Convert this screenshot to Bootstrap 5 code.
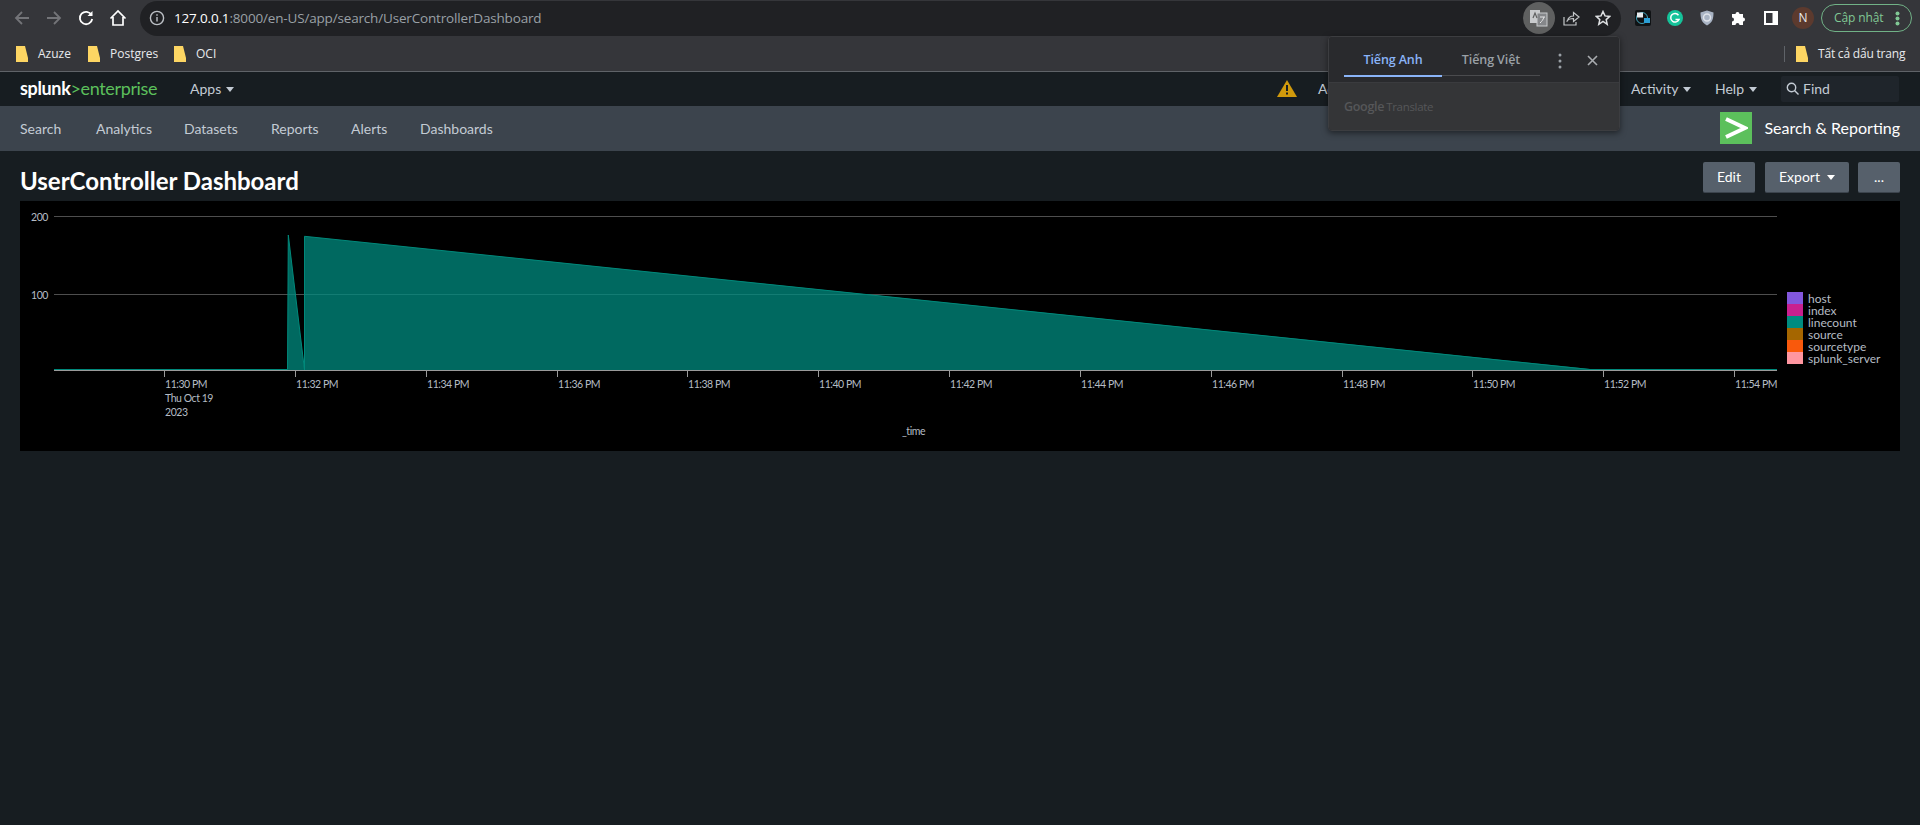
<!DOCTYPE html>
<html lang="en">

<head>
    <meta charset="UTF-8">
    <meta name="viewport" content="width=device-width, initial-scale=1.0">
    <title>UserController Dashboard</title>
    <link href="https://cdn.jsdelivr.net/npm/bootstrap@5.3.0/dist/css/bootstrap.min.css" rel="stylesheet">
    <style>
        body {
            background-color: #171d21;
            font-family: 'Lato', 'Open Sans', sans-serif;
            height: 825px;
            overflow: hidden;
            position: relative;
        }

        /* browser chrome */
        .tool-bar {
            height: 36px;
            background-color: #35363a;
            padding-left: 6px;
        }

        .tool-btn {
            width: 32px;
            height: 32px;
            flex: none;
        }

        .addr-bar {
            width: 1481px;
            height: 35px;
            margin-left: 6px;
            margin-right: 14px;
            background-color: #202124;
            border-radius: 18px;
            padding-left: 9px;
            padding-right: 10px;
            flex: none;
        }

        .addr-text {
            font-family: 'Open Sans', sans-serif;
            font-size: 13.5px;
            color: #9aa0a6;
            margin-left: 9px;
            letter-spacing: -0.17px;
        }

        .addr-text b {
            font-weight: 400;
            color: #fff;
        }

        .translate-btn {
            width: 32px;
            height: 32px;
            border-radius: 50%;
            background-color: #5f6060;
        }

        .update-pill {
            width: 91px;
            height: 28px;
            border: 1px solid #71b287;
            border-radius: 14px;
            color: #81c995;
            font-family: 'Open Sans', sans-serif;
            font-size: 12px;
            letter-spacing: -0.1px;
            padding-left: 12px;
            padding-right: 11px;
        }

        .user-dot {
            width: 22px;
            height: 22px;
            border-radius: 50%;
            background-color: #5c3a2e;
            color: #e8eaed;
            font-size: 12px;
            font-family: 'Open Sans', sans-serif;
        }

        .mark-bar {
            height: 36px;
            background-color: #35363a;
            border-bottom: 1px solid #5f6368;
            font-family: 'Open Sans', sans-serif;
            font-size: 12px;
            color: #e8eaed;
            padding-left: 16px;
        }

        .mark-item {
            gap: 10px;
        }

        .mark-sep {
            width: 1px;
            height: 16px;
            background-color: #5f6368;
        }

        /* splunk bars */
        .spl-bar {
            height: 34px;
            background-color: #171d21;
            color: #c3cbd4;
            font-size: 14px;
            padding-left: 20px;
            padding-bottom: 1px;
        }

        .spl-logo {
            width: 136px;
            font-size: 18px;
            line-height: 1;
            letter-spacing: -0.35px;
            color: #5cc05c;
            white-space: nowrap;
            margin-top: -1px;
        }

        .spl-logo b {
            color: #fff;
            font-weight: 700;
        }

        .caret-mark {
            display: inline-block;
            width: 0;
            height: 0;
            margin-left: 5px;
            vertical-align: 2px;
            border-left: 4px solid transparent;
            border-right: 4px solid transparent;
            border-top: 5px solid currentColor;
        }

        .find-box {
            width: 118px;
            height: 26px;
            background-color: #1f252b;
            border-radius: 2px;
            padding-left: 5px;
            margin-right: 21px;
        }

        .app-bar {
            height: 45px;
            background-color: #3c444d;
            color: #c3cbd4;
            font-size: 14px;
            padding-left: 20px;
            padding-right: 20px;
            padding-bottom: 1px;
        }

        .app-name {
            font-size: 16px;
            color: #fff;
            margin-left: 12px;
        }

        .app-logo {
            width: 32px;
            height: 32px;
            background-color: #5cc05c;
        }

        /* dashboard */
        .dash-head {
            height: 50px;
            padding: 3px 20px 0;
        }

        .dash-title {
            font-size: 24px;
            font-weight: 700;
            color: #fff;
            margin: 7px 0 0;
        }

        .dash-btn {
            height: 31px;
            background-color: #56606b;
            border: 0;
            border-bottom: 1px solid #3c444d;
            border-radius: 2px;
            color: #fff;
            font-size: 14px;
            padding: 0 0 2px;
        }

        .chart-panel {
            margin: 0 20px;
            height: 250px;
            background-color: #000;
        }

        .chart-panel svg {
            display: block;
        }

        .chart-panel text {
            font-family: 'Lato', sans-serif;
            font-size: 10.5px;
            letter-spacing: -0.45px;
            fill: #b5bcc4;
        }

        .chart-panel .legend-text {
            font-size: 12px;
            letter-spacing: 0;
        }

        /* translate popup */
        .translate-pop {
            position: absolute;
            left: 1328px;
            top: 36px;
            width: 292px;
            height: 95px;
            background-color: #292a2d;
            border: 1px solid #3c3d40;
            border-radius: 4px;
            box-shadow: 0 2px 6px rgba(0, 0, 0, .5);
            font-family: 'Open Sans', sans-serif;
            font-size: 12.5px;
            font-weight: 600;
            letter-spacing: -0.1px;
            overflow: hidden;
        }

        .pop-tabs {
            height: 46px;
            background-color: #292a2d;
            border-bottom: 1px solid #3a3b3e;
            position: relative;
            padding-left: 15px;
        }

        .pop-tab {
            width: 98px;
            height: 38px;
            text-align: center;
            color: #9aa0a6;
            border-bottom: 1px solid #4a4b4e;
            line-height: 45px;
            box-sizing: content-box;
        }

        .pop-tab.on {
            color: #8ab4f8;
            border-bottom: 2px solid #8ab4f8;
        }

        .pop-body {
            height: 48px;
            background-color: #343537;
            padding-left: 15px;
            color: #565759;
            font-size: 11.5px;
            font-weight: 400;
            letter-spacing: -0.3px;
        }

        .pop-body b {
            font-size: 12.5px;
            font-weight: 600;
            margin-right: 2px;
        }
    </style>
</head>

<body>
    <!-- browser toolbar -->
    <div class="tool-bar d-flex align-items-center">
        <div class="tool-btn d-flex align-items-center justify-content-center">
            <svg width="16" height="16" viewBox="0 0 16 16" fill="none" stroke="#737478" stroke-width="1.8"><path d="M15 8H2M8 2 2 8l6 6"/></svg>
        </div>
        <div class="tool-btn d-flex align-items-center justify-content-center">
            <svg width="16" height="16" viewBox="0 0 16 16" fill="none" stroke="#737478" stroke-width="1.8"><path d="M1 8h13M8 2l6 6-6 6"/></svg>
        </div>
        <div class="tool-btn d-flex align-items-center justify-content-center">
            <svg width="16" height="16" viewBox="0 0 16 16" fill="none" stroke="#fff" stroke-width="1.8"><path d="M13.5 5A6.2 6.2 0 1 0 14.2 9"/><path d="M14.5 1v5h-5" fill="#fff" stroke="none"/></svg>
        </div>
        <div class="tool-btn d-flex align-items-center justify-content-center">
            <svg width="18" height="18" viewBox="0 0 18 18" fill="none" stroke="#fff" stroke-width="1.7"><path d="M1.5 9.5 9 2l7.5 7.5M4 8v8h10V8"/></svg>
        </div>
        <div class="addr-bar d-flex align-items-center">
            <svg width="16" height="16" viewBox="0 0 16 16" fill="none" stroke="#bdc1c6" stroke-width="1.4"><circle cx="8" cy="8" r="6.6"/><path d="M8 7v4.5M8 4.2v1.6"/></svg>
            <span class="addr-text"><b>127.0.0.1</b>:8000/en-US/app/search/UserControllerDashboard</span>
            <div class="translate-btn d-flex align-items-center justify-content-center ms-auto">
                <svg width="20" height="18" viewBox="0 0 20 18"><rect x="1" y="1" width="10" height="13" fill="#c9cbcd"/><rect x="8" y="4" width="10" height="13" fill="#85878a" stroke="#c9cbcd"/><path d="M4 9l2-5 2 5" fill="none" stroke="#5f6060" stroke-width="1.2"/><path d="M11 8h5M15 8c-1 3-2 4-4 6" fill="none" stroke="#e4e5e6"/></svg>
            </div>
            <svg style="margin-left:7px" width="18" height="18" viewBox="0 0 18 18" fill="none" stroke="#c4c7c9" stroke-width="1.2"><path d="M2 8v8h12v-3"/><path d="M5.5 12c.5-3 3-5 6-5V3.5L17 8l-5.500 4.500V9.500c-2.500 0-5 .5-6.500 2.500z"/></svg>
            <svg style="margin-left:15px" width="16" height="16" viewBox="0 0 16 16" fill="none" stroke="#dfe1e3" stroke-width="1.5"><path d="M8 1.500l2 4.400 4.800.5-3.600 3.200 1 4.700L8 11.500l-4.200 2.800 1-4.700L1.200 6.400 6 5.900z"/></svg>
        </div>
        <svg width="16" height="16" viewBox="0 0 16 16"><rect width="16" height="16" rx="2" fill="#101315"/><circle cx="7" cy="8" r="5.500" fill="none" stroke="#3fa1b8"/><rect x="2" y="2.500" width="6" height="5" fill="#e8eaed"/><rect x="9" y="8" width="6" height="5" fill="#2a9fd6"/></svg>
        <svg style="margin-left:16px" width="16" height="16" viewBox="0 0 16 16"><circle cx="8" cy="8" r="8" fill="#15c39a"/><path d="M11.500 5.200A4.300 4.300 0 1 0 12 9.500H8.500" fill="none" stroke="#fff" stroke-width="1.500"/></svg>
        <svg style="margin-left:17px" width="14" height="16" viewBox="0 0 14 16"><path d="M7 .5 13.500 2.500c0 6-1 10-6.500 13C1.500 12.500.5 8.500.5 2.500z" fill="#a9b4c4"/><circle cx="7" cy="7.500" r="3.500" fill="none" stroke="#dfe3ea" stroke-width="1.500"/></svg>
        <svg style="margin-left:17px" width="16" height="16" viewBox="0 0 16 16"><path d="M1 4h3.500a2 2 0 1 1 4 0H12v3.500a2 2 0 1 1 0 4V15H8.500a2 2 0 1 0-4 0H1v-3.500a2 2 0 1 0 0-4z" fill="#fff"/></svg>
        <svg style="margin-left:17px" width="14" height="14" viewBox="0 0 14 14"><rect width="14" height="14" fill="#fff"/><rect x="2" y="2" width="6.500" height="10" fill="#35363a"/></svg>
        <div class="user-dot d-flex align-items-center justify-content-center" style="margin-left:14px">N</div>
        <div class="update-pill d-flex align-items-center justify-content-between" style="margin-left:7px">
            Cập nhật
            <svg width="5" height="15" viewBox="0 0 5 15" fill="#81c995"><circle cx="2.500" cy="2.500" r="2"/><circle cx="2.500" cy="7.500" r="2"/><circle cx="2.500" cy="12.500" r="2"/></svg>
        </div>
    </div>

    <!-- bookmarks -->
    <div class="mark-bar d-flex align-items-center">
        <div class="mark-item d-flex align-items-center" style="width:72px">
            <svg width="12" height="16" viewBox="0 0 12 16"><path d="M0 0h9l3 12v4H0z" fill="#fdd663"/></svg>Azuze
        </div>
        <div class="mark-item d-flex align-items-center" style="width:86px">
            <svg width="12" height="16" viewBox="0 0 12 16"><path d="M0 0h9l3 12v4H0z" fill="#fdd663"/></svg>Postgres
        </div>
        <div class="mark-item d-flex align-items-center">
            <svg width="12" height="16" viewBox="0 0 12 16"><path d="M0 0h9l3 12v4H0z" fill="#fdd663"/></svg>OCI
        </div>
        <div class="mark-sep ms-auto me-2"></div>
        <div class="mark-item d-flex align-items-center" style="width:127px;padding-left:3px;letter-spacing:-.2px">
            <svg width="12" height="16" viewBox="0 0 12 16"><path d="M0 0h9l3 12v4H0z" fill="#fdd663"/></svg>Tất cả dấu trang
        </div>
    </div>

    <!-- splunk top bar -->
    <div class="spl-bar d-flex align-items-center">
        <div class="spl-logo"><b>splunk</b>&gt;enterprise</div>
        <div style="margin-left:34px">Apps<span class="caret-mark"></span></div>
        <svg class="ms-auto" width="20" height="17" viewBox="0 0 20 17"><path d="M10 0 20 17H0z" fill="#d19a0c"/><path d="M10 5v6M10 12.500v2" stroke="#171d21" stroke-width="2"/></svg>
        <div style="margin-left:21px;width:313px">Administrator</div>
        <div style="width:84px">Activity<span class="caret-mark"></span></div>
        <div style="width:66px">Help<span class="caret-mark"></span></div>
        <div class="find-box d-flex align-items-center gap-1">
            <svg width="13" height="13" viewBox="0 0 13 13" fill="none" stroke="#c3cbd4" stroke-width="1.400"><circle cx="5.500" cy="5.500" r="4.200"/><path d="M8.500 8.500 12.500 12.500"/></svg>
            <span>Find</span>
        </div>
    </div>

    <!-- app nav -->
    <div class="app-bar d-flex align-items-center">
        <div style="width:76px">Search</div>
        <div style="width:88px">Analytics</div>
        <div style="width:87px">Datasets</div>
        <div style="width:80px">Reports</div>
        <div style="width:69px">Alerts</div>
        <div>Dashboards</div>
        <div class="app-logo ms-auto d-flex align-items-center justify-content-center">
            <svg width="24" height="24" viewBox="0 0 24 24" fill="none" stroke="#fff" stroke-width="4"><path d="M2 3 21 12 2 21"/></svg>
        </div>
        <div class="app-name">Search &amp; Reporting</div>
    </div>

    <!-- title row -->
    <div class="dash-head d-flex align-items-center">
        <h1 class="dash-title">UserController Dashboard</h1>
        <button class="dash-btn ms-auto" style="width:52px">Edit</button>
        <button class="dash-btn" style="width:84px;margin-left:10px">Export<span class="caret-mark" style="margin-left:7px"></span></button>
        <button class="dash-btn" style="width:42px;margin-left:9px">...</button>
    </div>

    <!-- chart -->
    <div class="chart-panel">
        <svg width="1880" height="250" viewBox="0 0 1880 250">
            <!-- grid, coordinates relative to panel (20,201) -->
            <path d="M34 15.500H1757M34 93.500H1757" stroke="#4e4e4e" fill="none"/>
            <text x="28" y="20" text-anchor="end">200</text>
            <text x="28" y="98" text-anchor="end">100</text>

            <path d="M34 168H267.500L268.300 34 284.500 169V35.300L1570 168H1757V170H34Z" fill="#008c80" fill-opacity=".75"/>
            <path d="M34 168.500H267.500L268.300 34 284.500 169V35.300L1570 168.500H1757" fill="none" stroke="#00897b"/>

            <path d="M34 169.500H1757" stroke="#9a9a9a" fill="none"/>
            <path stroke="#9a9a9a" d="M144.500 170v6M275.500 170v6M406.500 170v6M537.500 170v6M667.500 170v6M798.500 170v6M929.500 170v6M1060.500 170v6M1191.500 170v6M1322.500 170v6M1452.500 170v6M1583.500 170v6M1714.500 170v6"/>
            <text x="145" y="187">11:30 PM</text>
            <text x="145" y="201">Thu Oct 19</text>
            <text x="145" y="215">2023</text>
            <text x="276" y="187">11:32 PM</text>
            <text x="407" y="187">11:34 PM</text>
            <text x="538" y="187">11:36 PM</text>
            <text x="668" y="187">11:38 PM</text>
            <text x="799" y="187">11:40 PM</text>
            <text x="930" y="187">11:42 PM</text>
            <text x="1061" y="187">11:44 PM</text>
            <text x="1192" y="187">11:46 PM</text>
            <text x="1323" y="187">11:48 PM</text>
            <text x="1453" y="187">11:50 PM</text>
            <text x="1584" y="187">11:52 PM</text>
            <text x="1715" y="187">11:54 PM</text>
            <text x="893.500" y="234" text-anchor="middle">_time</text>

            <rect x="1767" y="91" width="16" height="12" fill="#8257dc"/>
            <rect x="1767" y="103" width="16" height="12" fill="#c9208f"/>
            <rect x="1767" y="115" width="16" height="12" fill="#008c80"/>
            <rect x="1767" y="127" width="16" height="12" fill="#a56600"/>
            <rect x="1767" y="139" width="16" height="12" fill="#f9590c"/>
            <rect x="1767" y="151" width="16" height="12" fill="#ff96a0"/>
            <text class="legend-text" x="1788" y="102">host</text>
            <text class="legend-text" x="1788" y="114">index</text>
            <text class="legend-text" x="1788" y="126">linecount</text>
            <text class="legend-text" x="1788" y="138">source</text>
            <text class="legend-text" x="1788" y="150">sourcetype</text>
            <text class="legend-text" x="1788" y="162">splunk_server</text>
        </svg>
    </div>

    <!-- translate popup -->
    <div class="translate-pop">
        <div class="pop-tabs d-flex">
            <div class="pop-tab on">Tiếng Anh</div>
            <div class="pop-tab">Tiếng Việt</div>
            <svg class="position-absolute" style="left:229px;top:16px" width="4" height="16" viewBox="0 0 4 16" fill="#9aa0a6"><circle cx="2" cy="2" r="1.500"/><circle cx="2" cy="8" r="1.500"/><circle cx="2" cy="14" r="1.500"/></svg>
            <svg class="position-absolute" style="left:258px;top:18px" width="11" height="11" viewBox="0 0 11 11" stroke="#a9acb0" stroke-width="1.600"><path d="M1 1l9 9M10 1l-9 9"/></svg>
        </div>
        <div class="pop-body d-flex align-items-center"><b>Google</b>Translate</div>
    </div>
</body>

</html>
